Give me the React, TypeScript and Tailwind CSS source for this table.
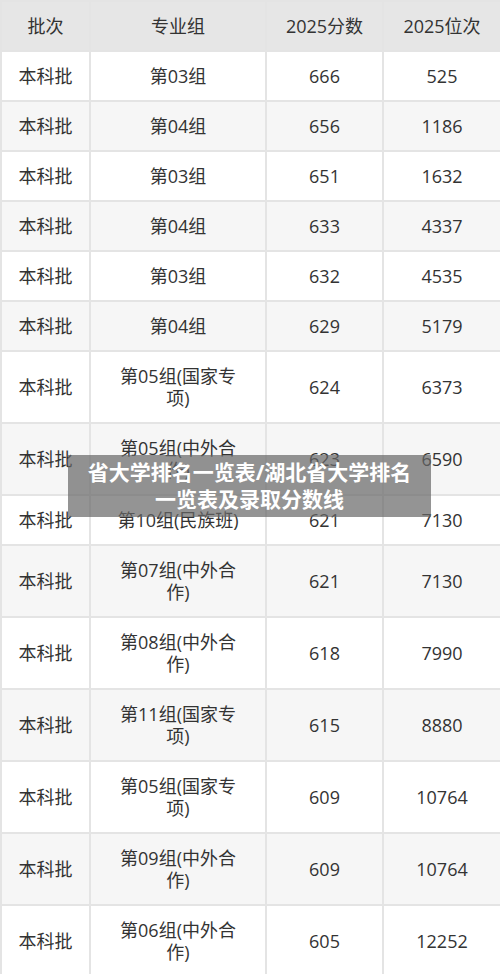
const rows: [string, string, string, string][] = [
  ['本科批', '第03组', '666', '525'],
  ['本科批', '第04组', '656', '1186'],
  ['本科批', '第03组', '651', '1632'],
  ['本科批', '第04组', '633', '4337'],
  ['本科批', '第03组', '632', '4535'],
  ['本科批', '第04组', '629', '5179'],
  ['本科批', '第05组(国家专项)', '624', '6373'],
  ['本科批', '第05组(中外合作)', '623', '6590'],
  ['本科批', '第10组(民族班)', '621', '7130'],
  ['本科批', '第07组(中外合作)', '621', '7130'],
  ['本科批', '第08组(中外合作)', '618', '7990'],
  ['本科批', '第11组(国家专项)', '615', '8880'],
  ['本科批', '第05组(国家专项)', '609', '10764'],
  ['本科批', '第09组(中外合作)', '609', '10764'],
  ['本科批', '第06组(中外合作)', '605', '12252'],
];

const cell = 'border-2 border-[#e4e4e4] py-[13px] text-center align-middle whitespace-nowrap';
const wideCell = 'border-2 border-[#e4e4e4] py-[13px] px-6 text-center align-middle';

export default function App() {
  return (
    <div className="relative w-[500px] h-[974px] overflow-hidden bg-white text-[#333] font-['Open_Sans','Noto_Sans_CJK_SC',sans-serif] text-[18px] leading-[22px]">
      <table className="w-[500px] border-collapse table-fixed">
        <colgroup>
          <col className="w-[89px]" />
          <col className="w-[176px]" />
          <col className="w-[117px]" />
          <col className="w-[118px]" />
        </colgroup>
        <thead>
          <tr className="bg-[#e6e6e6]">
            <th className={`${cell} font-normal`}>批次</th>
            <th className={`${wideCell} font-normal`}>专业组</th>
            <th className={`${cell} font-normal`}>2025分数</th>
            <th className={`${cell} font-normal`}>2025位次</th>
          </tr>
        </thead>
        <tbody>
          {rows.map((r, i) => (
            <tr key={i} className={i % 2 === 0 ? 'bg-white' : 'bg-[#f6f6f6]'}>
              <td className={cell}>{r[0]}</td>
              <td className={wideCell}>{r[1]}</td>
              <td className={cell}>{r[2]}</td>
              <td className={cell}>{r[3]}</td>
            </tr>
          ))}
        </tbody>
      </table>

      {/* title banner over the table */}
      <div className="absolute left-[68px] top-[455px] w-[363px] h-[62px] bg-[rgba(102,102,102,0.7)] px-4 flex items-center justify-center">
        <p className="text-white font-bold text-[21px] leading-[27px] text-center">
          省大学排名一览表/湖北省大学排名一览表及录取分数线
        </p>
      </div>
    </div>
  );
}
